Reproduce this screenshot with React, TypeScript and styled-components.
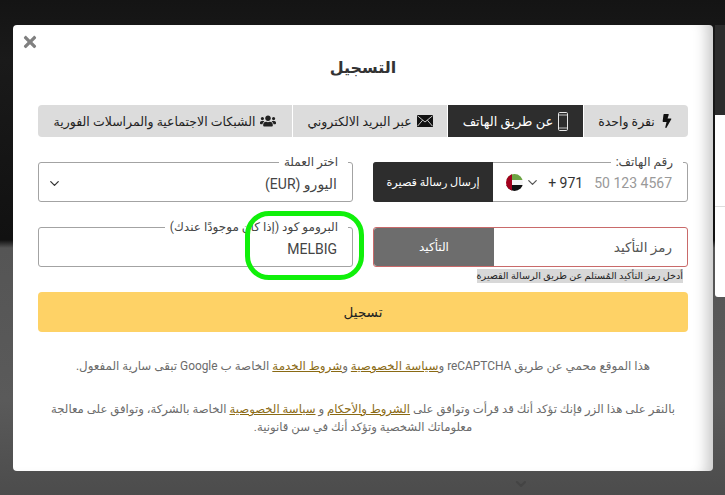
import React from "react";
import styled, { createGlobalStyle } from "styled-components";
import { FaBolt, FaUsers, FaTimes } from "react-icons/fa";
import { ChevronDown } from "lucide-react";

const Global = createGlobalStyle`
  html, body { margin: 0; padding: 0; }
  body {
    width: 725px; height: 495px; overflow: hidden;
    font-family: Roboto, "DejaVu Sans", sans-serif;
    background: linear-gradient(180deg, #141414 0, #1a1a1a 60px, #111 240px, #555 248px, #5a5a5a 400px, #4c4c4c 495px);
  }
`;

const Page = styled.div`
  position: relative;
  width: 725px;
  height: 495px;
  padding: 25px 12px 24px 13px;
  box-sizing: border-box;
`;

const SidePanel = styled.div`
  position: absolute;
  left: 715px;
  top: 115px;
  width: 10px;
  height: 182px;
  background: #fff;
  border-radius: 0 0 0 3px;
  &::before {
    content: "";
    position: absolute;
    left: 0;
    top: -90px;
    width: 10px;
    height: 90px;
    background: #2c2c2c;
  }
  &::after {
    content: "";
    position: absolute;
    left: 0;
    top: 91px;
    width: 10px;
    height: 1px;
    background: #ddd;
  }
`;

const BackdropChevron = styled.div`
  position: absolute;
  left: 513px;
  top: 476px;
  color: #444;
  line-height: 0;
`;

const Modal = styled.div`
  position: relative;
  width: 700px;
  height: 446px;
  padding: 0 25px;
  box-sizing: border-box;
  background: #fff;
  border-radius: 4px;
  box-shadow: inset -16px 0 14px -10px rgba(0, 0, 0, 0.22);
  direction: rtl;
`;

const Close = styled.div`
  position: absolute;
  left: 8px;
  top: 8px;
  color: #808080;
  font-size: 18px;
  line-height: 0;
`;

const Title = styled.h2`
  margin: 0;
  padding-top: 32px;
  height: 48px;
  line-height: 22px;
  text-align: center;
  font-size: 16px;
  font-weight: 700;
  color: #333;
`;

const Tabs = styled.div`
  display: flex;
  height: 32px;
  border-radius: 4px;
  overflow: hidden;
  gap: 1px;
`;

const Tab = styled.div<{ $active?: boolean; $w: number }>`
  width: ${(p) => p.$w}px;
  display: flex;
  align-items: center;
  justify-content: center;
  gap: 5px;
  font-size: ${(p) => (p.$active ? "13px" : "12.5px")};
  background: ${(p) => (p.$active ? "#2d2d2d" : "#dcdcdc")};
  color: ${(p) => (p.$active ? "#fff" : "#222")};
  svg { flex: none; }
`;

const Form = styled.div`
  display: grid;
  grid-template-columns: 315px 315px;
  column-gap: 20px;
  row-gap: 25px;
  margin-top: 25px;
`;

const Field = styled.div<{ $error?: boolean }>`
  position: relative;
  height: 40px;
  box-sizing: border-box;
  display: flex;
  align-items: center;
  border: 1px solid ${(p) => (p.$error ? "#c96a6a" : "#a3a3a3")};
  border-radius: 3px;
`;

const Legend = styled.label`
  position: absolute;
  right: 4px;
  top: -7px;
  height: 14px;
  padding: 0 10px 0 5px;
  background: #fff;
  font-size: 12px;
  line-height: 13px;
  color: #444;
  white-space: nowrap;
`;

const Value = styled.div`
  flex: 1;
  padding: 4px 15px 0;
  font-size: 14px;
  color: #444;
  white-space: nowrap;
`;

const Caret = styled.div`
  display: flex;
  padding: 2px 0 0 8px;
  color: #333;
`;

const Placeholder = styled.span`
  margin-right: 15px;
  padding-top: 1px;
  font-size: 14px;
  color: #999;
  direction: ltr;
`;

const Dial = styled.span`
  margin-right: 11px;
  padding-top: 1px;
  font-size: 14px;
  color: #333;
  direction: ltr;
`;

const PhoneChevron = styled.span`
  display: flex;
  margin: 1px 8px 0 2px;
  color: #555;
`;

const Spacer = styled.div`
  flex: 1;
`;

const SideButton = styled.div<{ $muted?: boolean }>`
  width: 120px;
  height: ${(p) => (p.$muted ? "38px" : "40px")};
  margin: ${(p) => (p.$muted ? "0" : "-1px")};
  flex: none;
  display: flex;
  align-items: center;
  justify-content: center;
  font-size: ${(p) => (p.$muted ? "12px" : "11.2px")};
  color: #fff;
  background: ${(p) => (p.$muted ? "#6d6d6d" : "#2d2d2d")};
  border-radius: 3px 0 0 3px;
`;

const CodeLabel = styled.div`
  flex: 1;
  padding: 0 15px 0 0;
  font-size: 13.5px;
  color: #555;
`;

const Hint = styled.div`
  position: absolute;
  right: 4px;
  top: 41px;
  height: 14px;
  line-height: 14px;
  font-size: 9.6px;
  color: #222;
  background: #d8d8d8;
  white-space: nowrap;
`;

const Ring = styled.div`
  position: absolute;
  right: -12px;
  top: -17px;
  width: 119px;
  height: 69px;
  box-sizing: border-box;
  border: 5px solid #10f00a;
  border-radius: 24px;
  pointer-events: none;
`;

const Submit = styled.div`
  height: 40px;
  margin-top: 25px;
  display: flex;
  align-items: center;
  justify-content: center;
  border-radius: 4px;
  background: #fed266;
  color: #222;
  font-size: 13.5px;
`;

const Note = styled.p<{ $top: number; $size: number }>`
  margin: ${(p) => p.$top}px 0 0;
  text-align: center;
  font-size: ${(p) => p.$size}px;
  line-height: 18px;
  color: #6b6b6b;
  a { color: #8a6a14; text-decoration: underline; }
`;

const Flag = () => (
  <svg width="17" height="17" viewBox="0 0 17 17">
    <clipPath id="c"><circle cx="8.5" cy="8.5" r="8.5" /></clipPath>
    <g clipPath="url(#c)">
      <rect width="17" height="6" fill="#6da544" />
      <rect y="6" width="17" height="5" fill="#f4f4f4" />
      <rect y="11" width="17" height="6" fill="#111" />
      <rect width="6" height="17" fill="#a2001d" />
    </g>
  </svg>
);

const Envelope = () => (
  <svg width="16" height="12" viewBox="0 0 16 12">
    <rect width="16" height="12" fill="#111" />
    <path d="M0.5 0.8 L8 7 L15.5 0.8 M0.5 11.2 L5.6 5.2 M15.5 11.2 L10.4 5.2" stroke="#dcdcdc" strokeWidth="0.9" fill="none" />
  </svg>
);

const Phone = () => (
  <svg width="10" height="19" viewBox="0 0 10 19">
    <rect x="0.5" y="0.5" width="9" height="18" rx="1.2" fill="none" stroke="#e8e8e8" />
    <path d="M0.5 3 H9.5 M0.5 16 H9.5" stroke="#e8e8e8" strokeWidth="0.8" />
  </svg>
);

export default function App() {
  return (
    <Page>
      <Global />
      <SidePanel />
      <BackdropChevron><ChevronDown size={16} strokeWidth={3} /></BackdropChevron>
      <Modal>
        <Close><FaTimes /></Close>
        <Title>التسجيل</Title>
        <Tabs>
          <Tab $w={104}><FaBolt size={14} color="#111" />نقرة واحدة</Tab>
          <Tab $w={135} $active><Phone />عن طريق الهاتف</Tab>
          <Tab $w={154}><Envelope />عبر البريد الالكتروني</Tab>
          <Tab $w={254}><FaUsers size={16} color="#222" />الشبكات الاجتماعية والمراسلات الفورية</Tab>
        </Tabs>
        <Form>
          <Field>
            <Legend>رقم الهاتف:</Legend>
            <Placeholder>50 123 4567</Placeholder>
            <Dial>+ 971</Dial>
            <PhoneChevron><ChevronDown size={15} /></PhoneChevron>
            <Flag />
            <Spacer />
            <SideButton>إرسال رسالة قصيرة</SideButton>
          </Field>
          <Field>
            <Legend>اختر العملة</Legend>
            <Value>اليورو (EUR)</Value>
            <Caret><ChevronDown size={15} /></Caret>
          </Field>
          <Field $error>
            <CodeLabel>رمز التأكيد</CodeLabel>
            <SideButton $muted>التأكيد</SideButton>
            <Hint>أدخل رمز التأكيد المُستلم عن طريق الرسالة القصيرة</Hint>
          </Field>
          <Field>
            <Legend>البرومو كود (إذا كان موجودًا عندك)</Legend>
            <Value>MELBIG</Value>
            <Ring />
          </Field>
        </Form>
        <Submit>تسجيل</Submit>
        <Note $top={25} $size={11.9}>
          هذا الموقع محمي عن طريق reCAPTCHA و<a>سياسة الخصوصية</a> و<a>شروط الخدمة</a> الخاصة ب Google تبقى سارية المفعول.
        </Note>
        <Note $top={25} $size={11.7}>
          بالنقر على هذا الزر فإنك تؤكد أنك قد قرأت وتوافق على <a>الشروط والأحكام</a> و <a>سياسة الخصوصية</a> الخاصة بالشركة، وتوافق على معالجة معلوماتك الشخصية وتؤكد أنك في سن قانونية.
        </Note>
      </Modal>
    </Page>
  );
}
